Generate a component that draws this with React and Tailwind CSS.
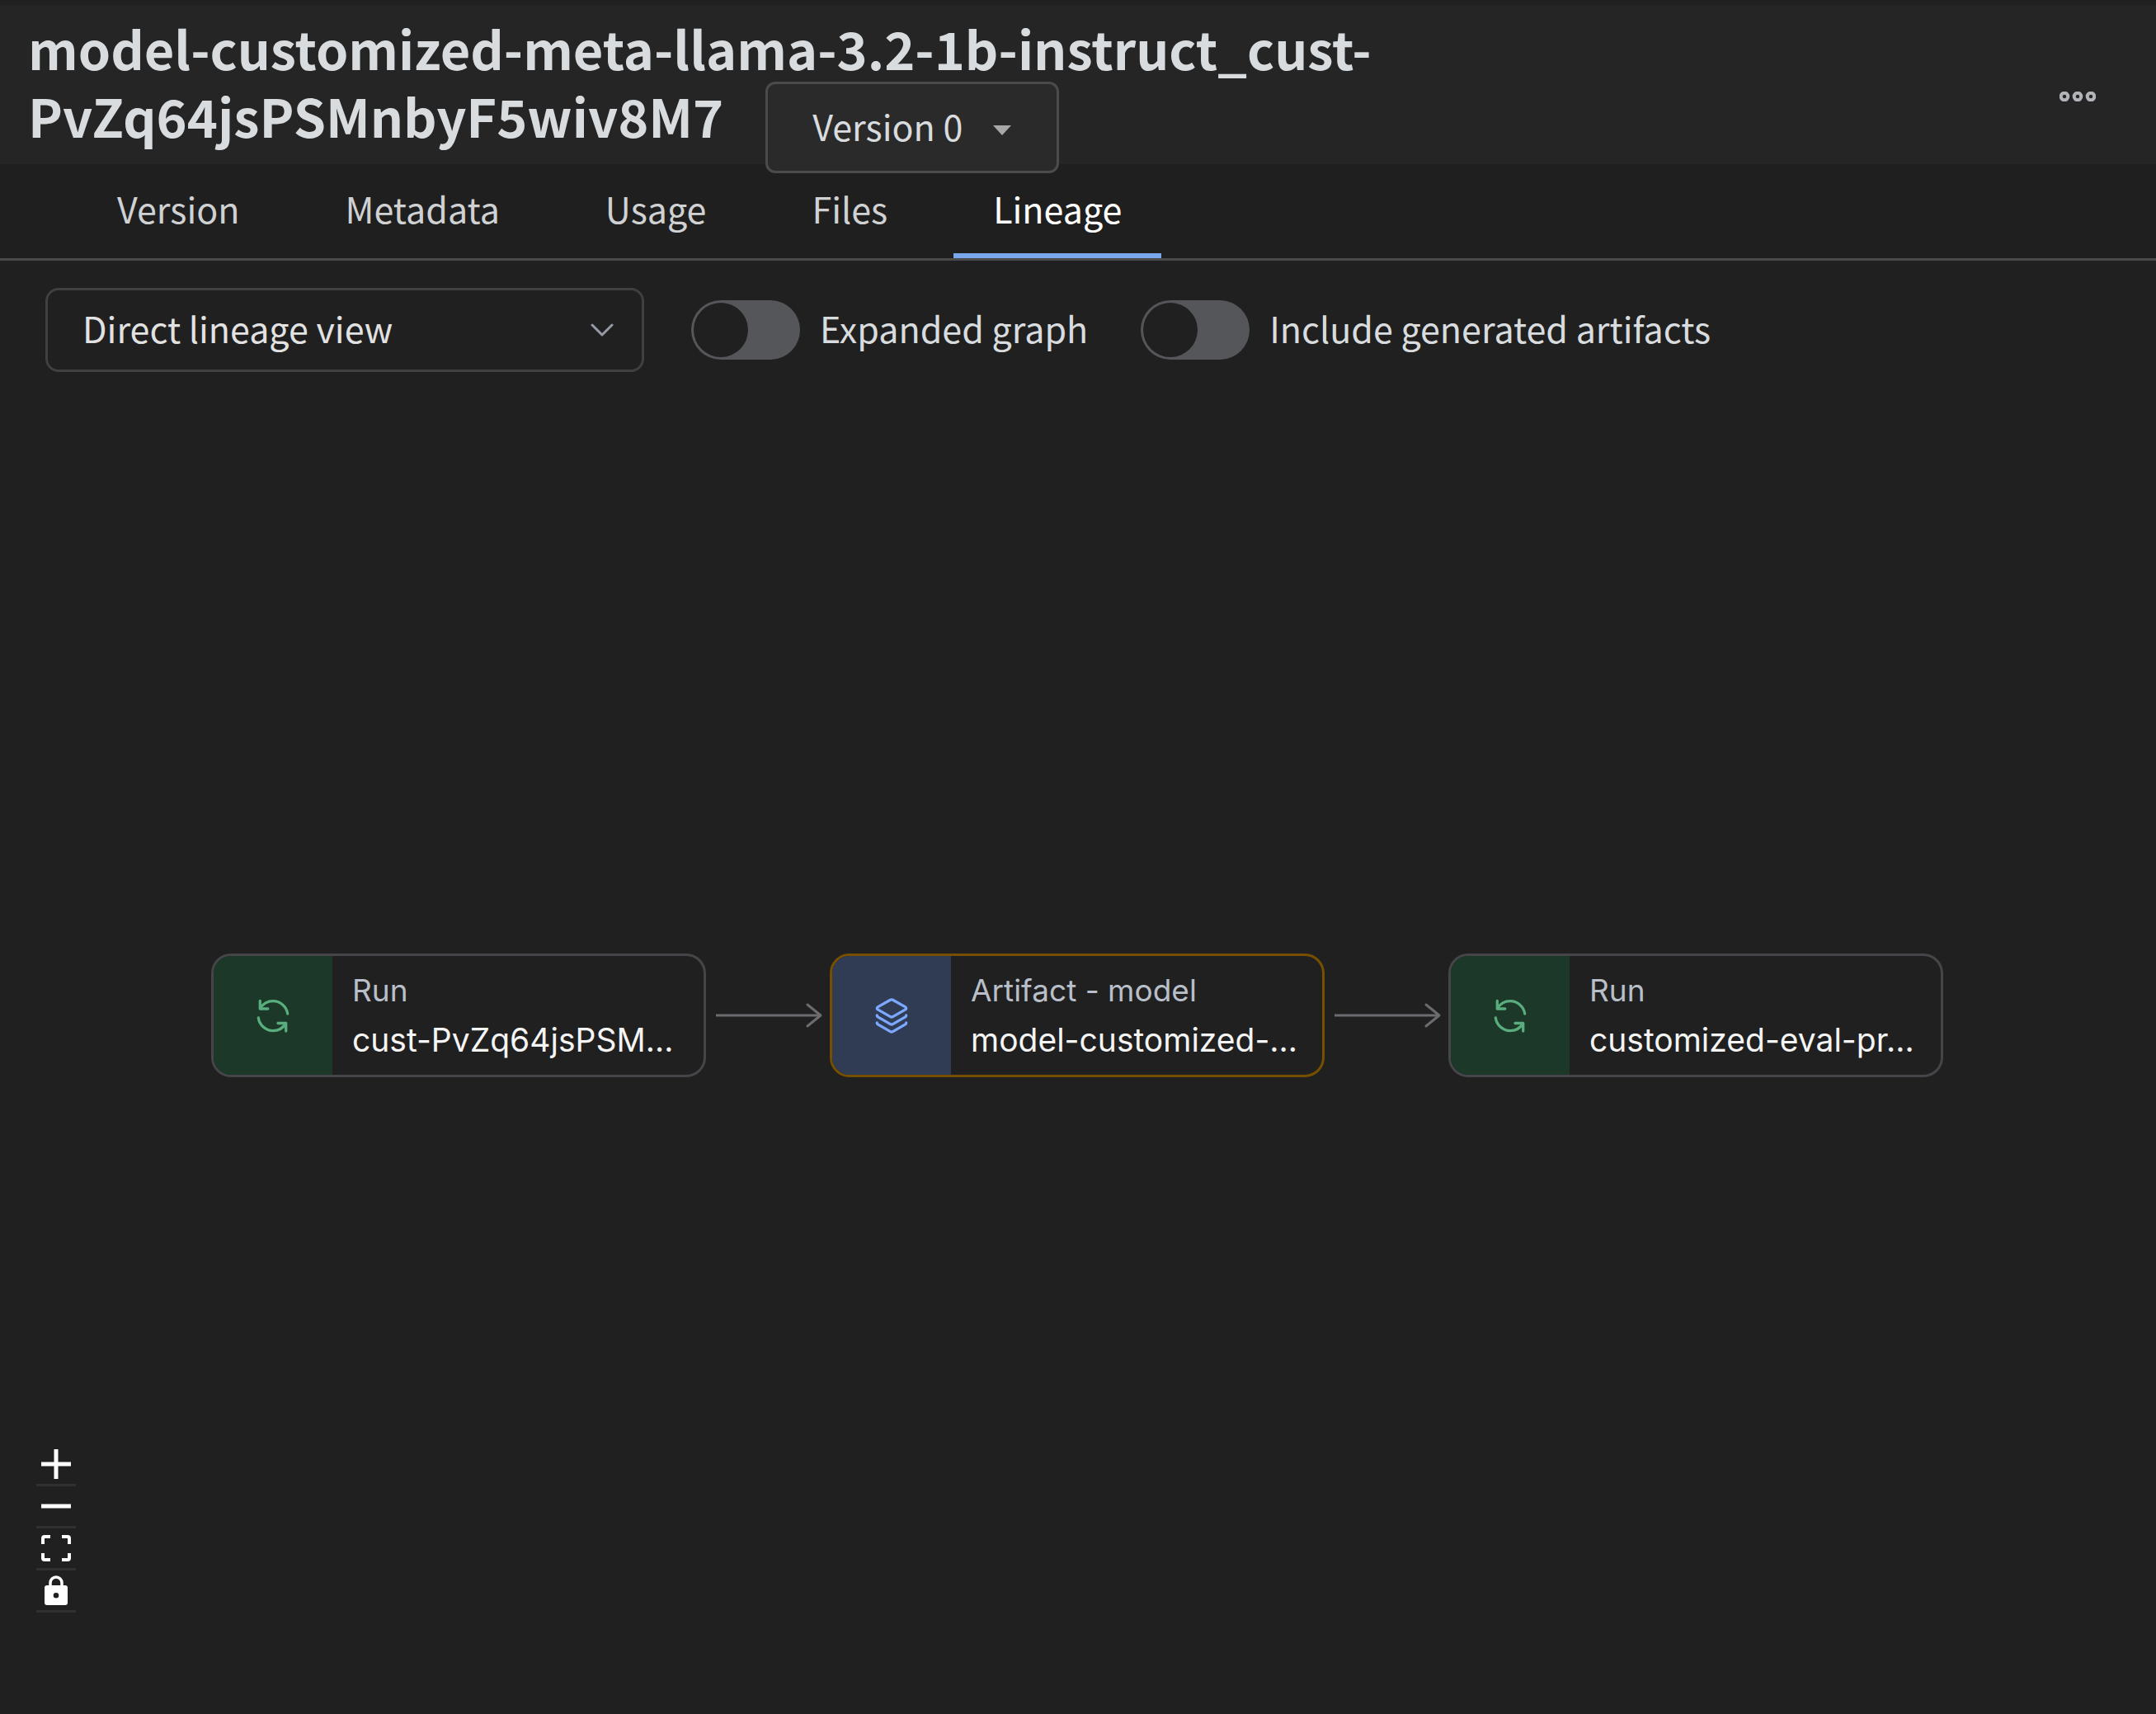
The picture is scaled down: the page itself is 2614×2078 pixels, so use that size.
import { useState } from "react";

const tabs = ["Version", "Metadata", "Usage", "Files", "Lineage"];

function RunIcon() {
  return (
    <svg className="size-12" viewBox="0 0 48 48" fill="none" stroke="#5aad7c" strokeWidth="3.300" strokeLinecap="round" strokeLinejoin="round" aria-hidden="true">
      <path d="M8.300 6.500v9.500h9.500" />
      <path d="M8.500 15.500C12 9.800 17.500 6.700 24 6.700C33 6.700 40.500 13.500 41.700 22" />
      <path d="M6.300 27C7.500 35.500 15 42.700 24 42.700C30.500 42.700 36 39.500 39.500 34" />
      <path d="M30 33.500h9.700V43" />
    </svg>
  );
}

function LayersIcon() {
  return (
    <svg className="size-12" viewBox="0 0 48 48" fill="none" stroke="#7ca9ff" strokeWidth="3.300" strokeLinecap="round" strokeLinejoin="round" aria-hidden="true">
      <path d="M22.500 5.200 7.200 13.900q-1.800 1.500 0 3L22.500 25.600q1.500.8 3 0L40.800 16.900q1.800-1.500 0-3L25.500 5.200q-1.500-.8-3 0Z" />
      <path d="M6.300 24q0 1.300 1 1.900L22.500 34.600q1.500.8 3 0L40.700 25.900q1-.6 1-1.900" />
      <path d="M6.300 33q0 1.300 1 1.900L22.500 43.600q1.500.8 3 0L40.700 34.900q1-.6 1-1.900" />
    </svg>
  );
}

function Arrow() {
  return (
    <svg className="h-8 w-[150px] shrink-0" viewBox="0 0 150 32" fill="none" stroke="#6b6b70" strokeWidth="3" aria-hidden="true">
      <path d="M12 16h127" />
      <path d="m123 3 16 13-16 13" strokeLinecap="round" strokeLinejoin="round" />
    </svg>
  );
}

function Node({ kind, name, artifact }) {
  return (
    <button
      type="button"
      className={`flex h-[150px] w-[600px] shrink-0 overflow-hidden rounded-3xl border-3 text-left font-[Inter,sans-serif] ${artifact ? "border-[#765000]" : "border-[#46464a]"}`}
    >
      <span className={`flex h-full w-36 shrink-0 items-center justify-center ${artifact ? "bg-[#2f3c54]" : "bg-[#1b3828]"}`}>
        {artifact ? <LayersIcon /> : <RunIcon />}
      </span>
      <span className="flex h-full flex-1 flex-col justify-center pl-6 whitespace-nowrap">
        <span className="text-[37px] leading-[60px] text-[#b9bfc9]">{kind}</span>
        <span className="text-[39px] leading-[60px] text-[#f5f5f5]">{name}</span>
      </span>
    </button>
  );
}

function Toggle({ label }) {
  const [on, setOn] = useState(false);
  return (
    <label className="flex items-center gap-6">
      <input type="checkbox" role="switch" checked={on} onChange={() => setOn(!on)} className="peer sr-only" />
      <span className="flex h-[72px] w-[132px] shrink-0 rounded-full bg-[#55565a] p-[3px] peer-checked:justify-end">
        <span className="size-[66px] rounded-full bg-[#202020]" />
      </span>
      <span className="pb-1.5">{label}</span>
    </label>
  );
}

function Control({ label, children }) {
  return (
    <button type="button" aria-label={label} className="flex h-[51px] w-12 items-center justify-center border-b-3 border-[#303030] text-white">
      {children}
    </button>
  );
}

export default function App() {
  const [active, setActive] = useState("Lineage");
  return (
    <div className="flex min-h-screen flex-col bg-[#202020] pt-1.5 font-['Noto_Sans_CJK_SC',sans-serif] text-[43px] leading-[64px] text-[#d9dcdf]">
      <header className="flex h-[193px] items-start justify-between bg-[#252525] pt-[11px] pr-[73px] pl-[34px]">
        <div>
          <h1 className="text-[63px] leading-[82px] font-bold">
            model-customized-meta-llama-3.2-1b-instruct_cust-
            <br />
            <span className="flex items-start gap-[51px]">
              PvZq64jsPSMnbyF5wiv8M7
              <button type="button" className="z-10 -mb-9 flex h-[111px] items-center gap-9 rounded-xl border-3 border-[#4b4b4b] bg-[#2a2a2a] px-[54px] pb-1.5 text-[43px] leading-[64px] font-normal">
                Version 0
                <svg className="mt-3 h-3 w-6" viewBox="0 0 24 12" fill="#a8a8a8" aria-hidden="true">
                  <path d="M1 0h22L12 12Z" />
                </svg>
              </button>
            </span>
          </h1>
        </div>
        <button type="button" aria-label="More options" className="mt-[94px]">
          <svg className="h-3 w-11" viewBox="0 0 44 12" fill="none" stroke="#b3b4b9" strokeWidth="4" aria-hidden="true">
            <circle cx="6" cy="6" r="4.300" />
            <circle cx="22" cy="6" r="4.300" />
            <circle cx="38" cy="6" r="4.300" />
          </svg>
        </button>
      </header>

      <nav role="tablist" className="flex h-[117px] items-stretch gap-8 border-b-3 border-[#4a4a4a] bg-[#1f1f1f] px-[94px]">
        {tabs.map((tab) => (
          <button
            key={tab}
            type="button"
            role="tab"
            aria-selected={tab === active}
            onClick={() => setActive(tab)}
            className={`border-b-6 px-12 pb-0.5 ${tab === active ? "border-[#79a7eb] text-white" : "border-transparent text-[#cfd1d3]"}`}
          >
            {tab}
          </button>
        ))}
      </nav>

      <div className="flex items-center pt-[33px] pl-[55px]">
        <div className="relative mr-[57px]">
          <select aria-label="Lineage view" className="h-[102px] w-[726px] appearance-none rounded-2xl border-3 border-[#404042] bg-transparent px-[42px] pb-1.5 text-[#e2e2e2]">
            <option>Direct lineage view</option>
          </select>
          <svg className="pointer-events-none absolute top-1/2 right-[37px] h-4 w-7 -translate-y-1/2" viewBox="0 0 28 16" fill="none" stroke="#949ba6" strokeWidth="3" strokeLinecap="round" strokeLinejoin="round" aria-hidden="true">
            <path d="m2 2 12 12L26 2" />
          </svg>
        </div>
        <div className="flex gap-16">
          <Toggle label="Expanded graph" />
          <Toggle label="Include generated artifacts" />
        </div>
      </div>

      <main className="flex flex-1 flex-col">
        <div className="flex items-center justify-center pt-[705px] pr-0.5">
          <Node kind="Run" name="cust-PvZq64jsPSM…" />
          <Arrow />
          <Node kind="Artifact - model" name="model-customized-…" artifact />
          <Arrow />
          <Node kind="Run" name="customized-eval-pr…" />
        </div>
        <div className="mt-auto mb-[123px] ml-11 flex w-12 flex-col">
          <Control label="Zoom in">
            <svg className="size-9" viewBox="0 0 36 36" fill="none" stroke="currentColor" strokeWidth="5" aria-hidden="true">
              <path d="M18 0v36M0 18h36" />
            </svg>
          </Control>
          <Control label="Zoom out">
            <svg className="size-9" viewBox="0 0 36 36" fill="none" stroke="currentColor" strokeWidth="5" aria-hidden="true">
              <path d="M0 18h36" />
            </svg>
          </Control>
          <Control label="Fit view">
            <svg className="h-8 w-9" viewBox="0 0 36 32" fill="none" stroke="currentColor" strokeWidth="4" aria-hidden="true">
              <path d="M2 11V4q0-2 2-2h7M25 2h7q2 0 2 2v7M34 22v6q0 2-2 2h-7M11 30H4q-2 0-2-2v-6" />
            </svg>
          </Control>
          <Control label="Lock">
            <svg className="h-9 w-7" viewBox="0 0 28 36" aria-hidden="true">
              <path d="M7 14V9a7 7 0 0 1 14 0v5" fill="none" stroke="currentColor" strokeWidth="3.500" />
              <path d="M3 12h22q3 0 3 3v18q0 3-3 3H3q-3 0-3-3V15q0-3 3-3Zm11 9a3.300 3.300 0 1 0 0 6.600a3.300 3.300 0 0 0 0-6.600Z" fill="currentColor" fillRule="evenodd" />
            </svg>
          </Control>
        </div>
      </main>
    </div>
  );
}
